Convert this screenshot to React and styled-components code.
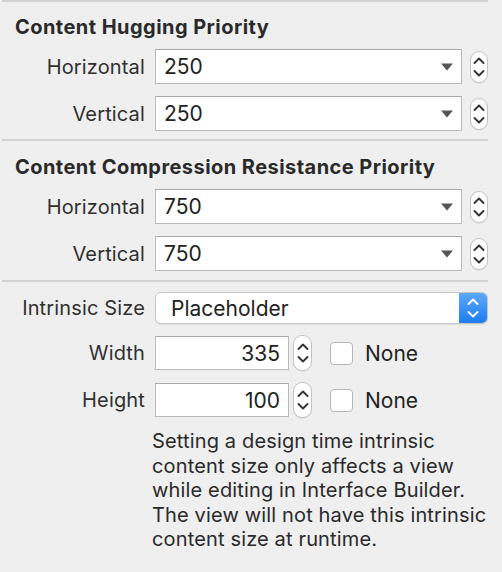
import React from 'react';
import styled, { createGlobalStyle } from 'styled-components';

const GlobalStyle = createGlobalStyle`
  html, body {
    margin: 0;
    padding: 0;
    background: #efefef;
  }
  body {
    font-family: Inter, "Liberation Sans", sans-serif;
    -webkit-font-smoothing: antialiased;
  }
`;

const Panel = styled.div`
  width: 502px;
  height: 572px;
  overflow: hidden;
  background: #efefef;
  color: #262626;
`;

const Separator = styled.div`
  height: 2px;
  margin: 0 14px 0 2px;
  background: #d2d2d2;
`;

const Section = styled.div`
  display: flex;
  flex-direction: column;
  padding: ${({ top }) => top}px 0 ${({ bottom }) => bottom}px;
`;

const Heading = styled.div`
  font-size: 20px;
  line-height: 24px;
  font-weight: 700;
  letter-spacing: 0.45px;
  color: #2a2a2a;
  margin: 0 0 10px 15px;
`;

const Rows = styled.div`
  display: flex;
  flex-direction: column;
  gap: ${({ gap }) => gap}px;
`;

const Row = styled.div`
  display: flex;
  align-items: center;
  height: ${({ h }) => h}px;
`;

const Label = styled.div`
  width: 145px;
  margin-right: 10px;
  text-align: right;
  font-size: 20px;
  letter-spacing: 0.15px;
  color: #303030;
  white-space: nowrap;
`;

const Field = styled.div`
  box-sizing: border-box;
  display: flex;
  align-items: center;
  width: ${({ w }) => w}px;
  height: ${({ h }) => h}px;
  padding: 0 8px;
  background: #fff;
  border: 1px solid #b9b9b9;
  border-top-color: #a9a9a9;
  font-size: 21px;
  color: #222;
`;

const Value = styled.span`
  flex: 1;
  text-align: ${({ align }) => align || 'left'};
`;

const Stepper = styled.div`
  box-sizing: border-box;
  width: ${({ w }) => w}px;
  height: ${({ h }) => h}px;
  margin-left: ${({ gap }) => gap}px;
  border: 1px solid #c3c3c3;
  border-radius: 9px;
  background: #fff;
  display: flex;
  align-items: center;
  justify-content: center;
  box-shadow: 0 1px 0 rgba(0, 0, 0, 0.05);
`;

const Popup = styled.div`
  box-sizing: border-box;
  display: flex;
  width: 333px;
  height: 32px;
  border: 1px solid #c6c6c6;
  border-radius: 6px;
  background: #fff;
  overflow: hidden;
  box-shadow: 0 1px 1px rgba(0, 0, 0, 0.08);
`;

const PopupText = styled.div`
  flex: 1;
  display: flex;
  align-items: center;
  padding-left: 15px;
  font-size: 21px;
  color: #222;
`;

const PopupArrows = styled.div`
  width: 28px;
  display: flex;
  align-items: center;
  justify-content: center;
  background: linear-gradient(#5da8fb, #1c7cf4);
`;

const Check = styled.div`
  box-sizing: border-box;
  width: 23px;
  height: 23px;
  margin: 0 12px 0 18px;
  border: 1px solid #b6b6b6;
  border-radius: 4px;
  background: #fff;
`;

const CheckLabel = styled.span`
  font-size: 21px;
  color: #222;
`;

const Note = styled.p`
  margin: 11px 0 0 152px;
  font-size: 20px;
  line-height: 24.5px;
  letter-spacing: 0.15px;
  color: #2a2a2a;
  white-space: nowrap;
`;

const Triangle = () => (
  <svg width="12" height="8" viewBox="0 0 12 8">
    <path d="M0 0.5 H12 L6 7.5 Z" fill="#555" />
  </svg>
);

const Chevrons = ({ color = '#333', h = 32 }) => {
  const mid = h / 2;
  return (
    <svg width="14" height={h - 4} viewBox={`0 ${2} 14 ${h - 4}`}>
      <path
        d={`M2.5 ${mid - 4} L7 ${mid - 8.5} L11.5 ${mid - 4} M2.5 ${mid + 4} L7 ${mid + 8.5} L11.5 ${mid + 4}`}
        fill="none"
        stroke={color}
        strokeWidth="1.9"
        strokeLinecap="round"
        strokeLinejoin="round"
      />
    </svg>
  );
};

const PriorityRow = ({ label, value }) => (
  <Row h={35}>
    <Label>{label}</Label>
    <Field w={307} h={35}>
      <Value>{value}</Value>
      <Triangle />
    </Field>
    <Stepper w={18} h={32} gap={8}>
      <Chevrons />
    </Stepper>
  </Row>
);

const SizeRow = ({ label, value }) => (
  <Row h={36}>
    <Label>{label}</Label>
    <Field w={134} h={34}>
      <Value align="right">{value}</Value>
    </Field>
    <Stepper w={19} h={36} gap={4}>
      <Chevrons h={36} />
    </Stepper>
    <Check />
    <CheckLabel>None</CheckLabel>
  </Row>
);

export default function App() {
  return (
    <Panel>
      <GlobalStyle />
      <Separator />
      <Section top={13} bottom={8}>
        <Heading>Content Hugging Priority</Heading>
        <Rows gap={12}>
          <PriorityRow label="Horizontal" value="250" />
          <PriorityRow label="Vertical" value="250" />
        </Rows>
      </Section>
      <Separator />
      <Section top={14} bottom={9}>
        <Heading>Content Compression Resistance Priority</Heading>
        <Rows gap={12}>
          <PriorityRow label="Horizontal" value="750" />
          <PriorityRow label="Vertical" value="750" />
        </Rows>
      </Section>
      <Separator />
      <Section top={10} bottom={0}>
        <Rows gap={11}>
          <Row h={32}>
            <Label>Intrinsic Size</Label>
            <Popup>
              <PopupText>Placeholder</PopupText>
              <PopupArrows>
                <Chevrons color="#fff" h={32} />
              </PopupArrows>
            </Popup>
          </Row>
          <SizeRow label="Width" value="335" />
          <SizeRow label="Height" value="100" />
        </Rows>
        <Note>
          Setting a design time intrinsic
          <br />
          content size only affects a view
          <br />
          while editing in Interface Builder.
          <br />
          The view will not have this intrinsic
          <br />
          content size at runtime.
        </Note>
      </Section>
    </Panel>
  );
}
